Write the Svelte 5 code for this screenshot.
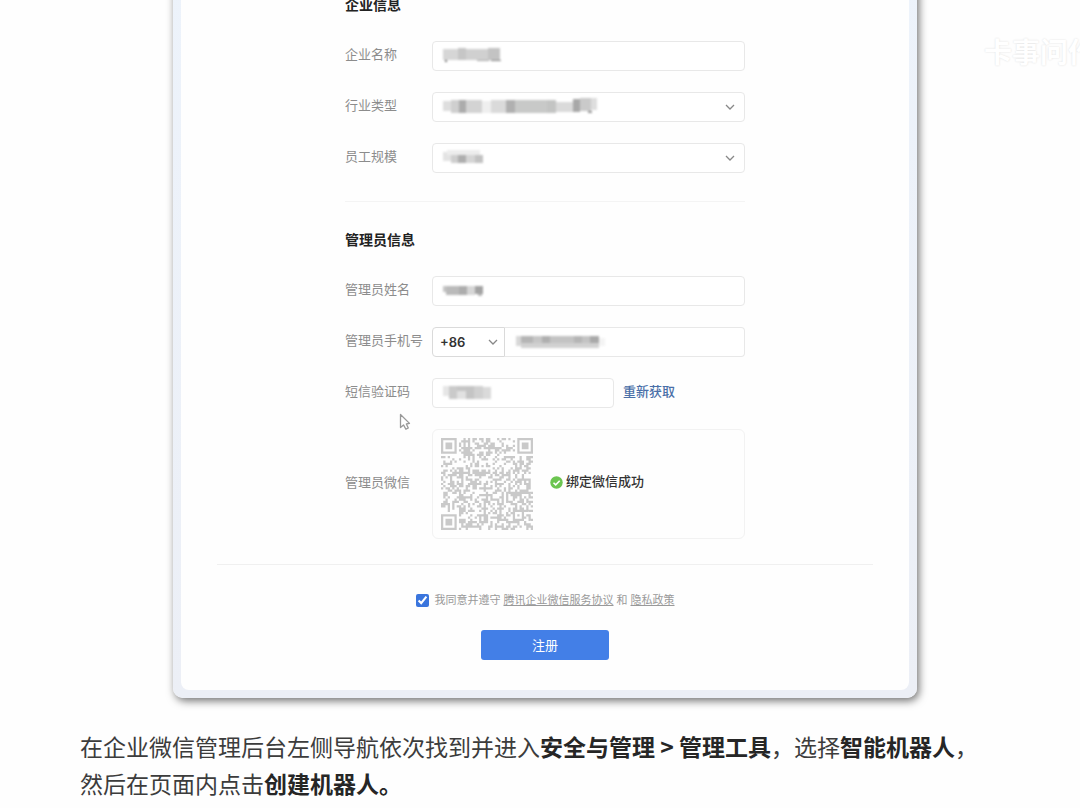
<script>
	let company = $state('');
	let industry = $state('');
	let scale = $state('');
	let adminName = $state('');
	let areaCode = $state('+86');
	let phone = $state('');
	let smsCode = $state('');
	let agreed = $state(true);

	// redacted values: [x, y, width, height, fill]
	const masks = {
		company: [
			[0, 1, 15, 11, '#d6d6d6'], [15, 0, 8, 12, '#c6c6c6'], [23, 1, 22, 11, '#d0d0d0'],
			[45, 0, 12, 12, '#c3c3c3'], [2, 12, 2, 2, '#777'], [34, 12, 12, 1, '#aaa'], [48, 12, 10, 1, '#888']
		],
		industry: [
			[0, 2, 8, 10, '#dedede'], [8, 1, 8, 13, '#cfcfcf'], [16, 1, 7, 13, '#acacac'], [23, 1, 16, 13, '#d3d3d3'],
			[39, 2, 9, 12, '#efefef'], [48, 1, 15, 13, '#dadada'], [63, 1, 9, 13, '#b0b0b0'], [72, 1, 32, 13, '#c8c9c8'],
			[104, 1, 9, 13, '#c3c4c3'], [113, 3, 17, 10, '#dadada'], [130, 0, 7, 13, '#a8a8a8'],
			[137, -1, 11, 13, '#cacaca'], [148, -1, 6, 12, '#dedede'], [145, 12, 4, 2, '#999']
		],
		scale: [
			[0, 2, 8, 9, '#e3e3e3'], [4, 0, 33, 5, '#ededed'], [8, 5, 7, 8, '#cecece'], [15, 5, 8, 8, '#aeaeae'],
			[23, 5, 9, 8, '#d5d5d5'], [32, 5, 8, 8, '#c2c2c2']
		],
		adminName: [
			[0, 3, 8, 6, '#c5c5c5'], [3, 3, 13, 9, '#bababa'], [16, 3, 8, 9, '#adadad'], [24, 3, 8, 9, '#d6d6d6'],
			[32, 3, 8, 8, '#a3a3a3'], [35, 11, 4, 2, '#bbb']
		],
		phone: [
			[0, 2, 5, 10, '#d8d8d8'], [5, 2, 12, 7, '#b5b5b5'], [17, 2, 9, 8, '#c6c6c6'], [26, 2, 8, 8, '#afafaf'],
			[34, 2, 24, 8, '#c3c3c3'], [58, 2, 8, 8, '#b5b5b5'], [66, 2, 8, 8, '#c3c3c3'], [74, 2, 9, 8, '#a9a9a9'],
			[5, 9, 78, 5, '#d1d1d1'], [83, 4, 6, 8, '#f4f4f4']
		],
		smsCode: [
			[0, 1, 7, 10, '#e6e6e6'], [6, 1, 8, 13, '#cacaca'], [14, 1, 9, 5, '#c5c5c5'], [14, 6, 9, 8, '#e1e1e1'],
			[23, 1, 8, 13, '#c4c4c4'], [31, 1, 9, 13, '#d0d0d0'], [40, 2, 8, 12, '#dadada']
		]
	};

	const QR = 41;

	function ring(x, y, cx, cy, r) {
		const d = Math.max(Math.abs(x - cx), Math.abs(y - cy));
		return d > r ? null : d !== r - 1;
	}

	function buildQr() {
		let seed = 20;
		let d = '';
		for (let y = 0; y < QR; y++) {
			for (let x = 0; x < QR; x++) {
				seed = (seed * 1103515245 + 12345) % 2147483648;
				let on = seed / 2147483648 > 0.52;
				const corner = (x < 8 || x > 32) && (y < 8 || y > 32) && !(x > 32 && y > 32);
				if (corner) {
					on = ring(x, y, x < 8 ? 3 : 37, y < 8 ? 3 : 37, 3) ?? false;
				} else {
					on = ring(x, y, 34, 34, 2) ?? on;
				}
				if (on) d += `M${x} ${y}h1v1h-1z`;
			}
		}
		return d;
	}

	const qrPath = buildQr();
</script>

{#snippet mask(key)}
	<svg class="mask" width="160" height="16" viewBox="0 -1 160 16" aria-hidden="true">
		{#each masks[key] as [x, y, w, h, fill]}
			<rect {x} {y} width={w} height={h} {fill} />
		{/each}
	</svg>
{/snippet}

{#snippet chevron()}
	<svg class="chevron" width="10" height="6" viewBox="0 0 10 6" aria-hidden="true">
		<path d="M1 1l4 4 4-4" fill="none" stroke="#888" stroke-width="1.3" />
	</svg>
{/snippet}

<article class="page">
	<span class="watermark" aria-hidden="true">卡事问作</span>

	<div class="frame">
		<form class="card" onsubmit={(e) => e.preventDefault()}>
			<div class="fields">
				<h2>企业信息</h2>
				<div class="row">
					<label for="company">企业名称</label>
					<div class="control">
						<input id="company" type="text" bind:value={company} />
						{@render mask('company')}
					</div>
				</div>
				<div class="row">
					<label for="industry">行业类型</label>
					<div class="control">
						<select id="industry" bind:value={industry}><option value=""></option></select>
						{@render mask('industry')}
						{@render chevron()}
					</div>
				</div>
				<div class="row">
					<label for="scale">员工规模</label>
					<div class="control">
						<select id="scale" bind:value={scale}><option value=""></option></select>
						{@render mask('scale')}
						{@render chevron()}
					</div>
				</div>

				<hr />

				<h2>管理员信息</h2>
				<div class="row">
					<label for="admin-name">管理员姓名</label>
					<div class="control">
						<input id="admin-name" type="text" bind:value={adminName} />
						{@render mask('adminName')}
					</div>
				</div>
				<div class="row">
					<label for="phone">管理员手机号</label>
					<div class="phone">
						<div class="control area">
							<select aria-label="区号" bind:value={areaCode}><option>+86</option></select>
							{@render chevron()}
						</div>
						<div class="control number">
							<input id="phone" type="tel" bind:value={phone} />
							{@render mask('phone')}
						</div>
					</div>
				</div>
				<div class="row">
					<label for="sms-code">短信验证码</label>
					<div class="sms">
						<div class="control">
							<input id="sms-code" type="text" bind:value={smsCode} />
							{@render mask('smsCode')}
						</div>
						<button type="button" class="resend">重新获取</button>
					</div>
					<svg class="pointer" width="12" height="18" viewBox="0 0 12 18" aria-hidden="true">
						<path d="M1.5 1.5v13l3-2.6 2.4 4.3 2.4-1.2-2-4 3.2-.6z" fill="#fff" stroke="#999" stroke-width="1.3" stroke-linejoin="round" />
					</svg>
				</div>
				<div class="row">
					<span class="label">管理员微信</span>
					<div class="wechat">
						<svg class="qr" viewBox="0 0 41 41" role="img" aria-label="二维码">
							<path d={qrPath} fill="#c9c9c9" />
						</svg>
						<div class="bound">
							<svg width="13" height="13" viewBox="0 0 13 13" aria-hidden="true">
								<circle cx="6.5" cy="6.5" r="6.2" fill="#6cc551" />
								<path d="M3.5 6.7l2.2 2.2 4-4.2" fill="none" stroke="#fff" stroke-width="1.6" />
							</svg>
							<span>绑定微信成功</span>
						</div>
					</div>
				</div>
			</div>

			<div class="footer">
				<div class="agree">
					<input id="agree" type="checkbox" bind:checked={agreed} />
					<label for="agree">我同意并遵守</label>
					<a href="#terms">腾讯企业微信服务协议</a>
					<span>和</span>
					<a href="#privacy">隐私政策</a>
				</div>
				<button type="submit" class="submit">注册</button>
			</div>
		</form>
	</div>

	<p>
		在企业微信管理后台左侧导航依次找到并进入<strong>安全与管理 &gt; 管理工具</strong>，选择<strong>智能机器人</strong>，<br />
		然后在页面内点击<strong>创建机器人。</strong>
	</p>
</article>

<style>
	:global(body) {
		margin: 0;
		background: #fefefe;
	}
	.page {
		position: relative;
		overflow: hidden;
		padding: 0 70px 0 80px;
		font-family: 'Liberation Sans', 'Noto Sans CJK SC', sans-serif;
		color: #333;
	}
	.page * { box-sizing: border-box; }
	.watermark {
		position: absolute;
		top: 36px;
		right: -16px;
		font-size: 28px;
		line-height: 36px;
		font-weight: 700;
		white-space: nowrap;
		color: #fff;
		text-shadow: 0 0 2px #ddd;
	}

	.frame {
		max-width: 744px;
		margin: -40px auto 0;
		padding: 8px;
		border-radius: 10px;
		background: linear-gradient(#edf3fb, #eceff6);
		box-shadow: 2px 3px 9px rgba(0, 0, 0, 0.55);
	}
	.card {
		padding: 25px 0 30px;
		border-radius: 8px;
		background: #fefefe;
	}
	.fields {
		max-width: 400px;
		margin: 0 auto;
	}
	h2 {
		margin: 0 0 24px;
		font-size: 14px;
		line-height: 24px;
		font-weight: 700;
		color: #222;
	}
	hr {
		height: 1px;
		margin: 28px 0 26px;
		border: 0;
		background: #f4f4f4;
	}

	.row {
		position: relative;
		display: grid;
		grid-template-columns: 87px 1fr;
		align-items: center;
	}
	.row + .row { margin-top: 21px; }
	.row > label, .label {
		padding-bottom: 2px;
		font-size: 13px;
		line-height: 20px;
		white-space: nowrap;
		color: #8c8c8c;
	}
	.control { position: relative; }
	.control input, .control select {
		display: block;
		width: 100%;
		height: 30px;
		margin: 0;
		padding: 0 12px;
		border: 1px solid #e8e8e8;
		border-radius: 4px;
		background: #fff;
		font: inherit;
		font-size: 13px;
		color: #333;
		outline: 0;
		appearance: none;
	}
	.mask {
		position: absolute;
		top: 6px;
		left: 11px;
		filter: blur(1px);
		pointer-events: none;
	}
	.chevron {
		position: absolute;
		top: 12px;
		right: 10px;
		pointer-events: none;
	}

	.phone { display: flex; }
	.area { flex: 0 0 73px; }
	.control.area select {
		padding: 0 7px;
		border-color: #dadada;
		border-radius: 4px 0 0 4px;
		font-family: Inter, 'Liberation Sans', sans-serif;
		font-weight: 600;
	}
	.area .chevron { right: 7px; }
	.number { flex: 1; }
	.control.number input {
		border-left: 0;
		border-radius: 0 4px 4px 0;
	}

	.sms {
		display: grid;
		grid-template-columns: 182px 1fr;
		align-items: center;
		gap: 9px;
	}
	.resend {
		justify-self: start;
		padding: 0 0 2px;
		border: 0;
		background: none;
		font: inherit;
		font-size: 13px;
		font-weight: 500;
		line-height: 20px;
		color: #4a6fa8;
		cursor: pointer;
	}
	.pointer {
		position: absolute;
		top: 35px;
		left: 54px;
	}

	.wechat {
		display: flex;
		align-items: center;
		gap: 17px;
		height: 110px;
		padding: 8px;
		border: 1px solid #f2f2f2;
		border-radius: 6px;
	}
	.qr {
		width: 92px;
		height: 92px;
	}
	.bound {
		display: flex;
		align-items: center;
		gap: 3px;
		padding-bottom: 4px;
		font-size: 13px;
		font-weight: 500;
		line-height: 20px;
	}

	.footer {
		display: flex;
		flex-direction: column;
		align-items: center;
		gap: 20px;
		margin: 25px 36px 0;
		padding-top: 25px;
		border-top: 1px solid #f0f0f0;
	}
	.agree {
		display: flex;
		align-items: center;
		gap: 3px;
		font-size: 11px;
		line-height: 20px;
		color: #999;
	}
	.agree a {
		color: #999;
		text-decoration: underline;
		text-underline-offset: 1px;
	}
	.agree input {
		width: 13px;
		height: 13px;
		margin: 0 3px 0 0;
		accent-color: #3a75dd;
	}
	.submit {
		width: 128px;
		height: 30px;
		padding: 0 0 2px;
		border: 0;
		border-radius: 3px;
		background: #437fe7;
		font: inherit;
		font-size: 13px;
		color: #fff;
		cursor: pointer;
	}

	p {
		margin: 30px 0 0;
		font-family: 'Noto Sans CJK SC', sans-serif;
		font-size: 23px;
		line-height: 37px;
		color: #3c3c3c;
	}
	p strong { color: #262626; }
</style>
